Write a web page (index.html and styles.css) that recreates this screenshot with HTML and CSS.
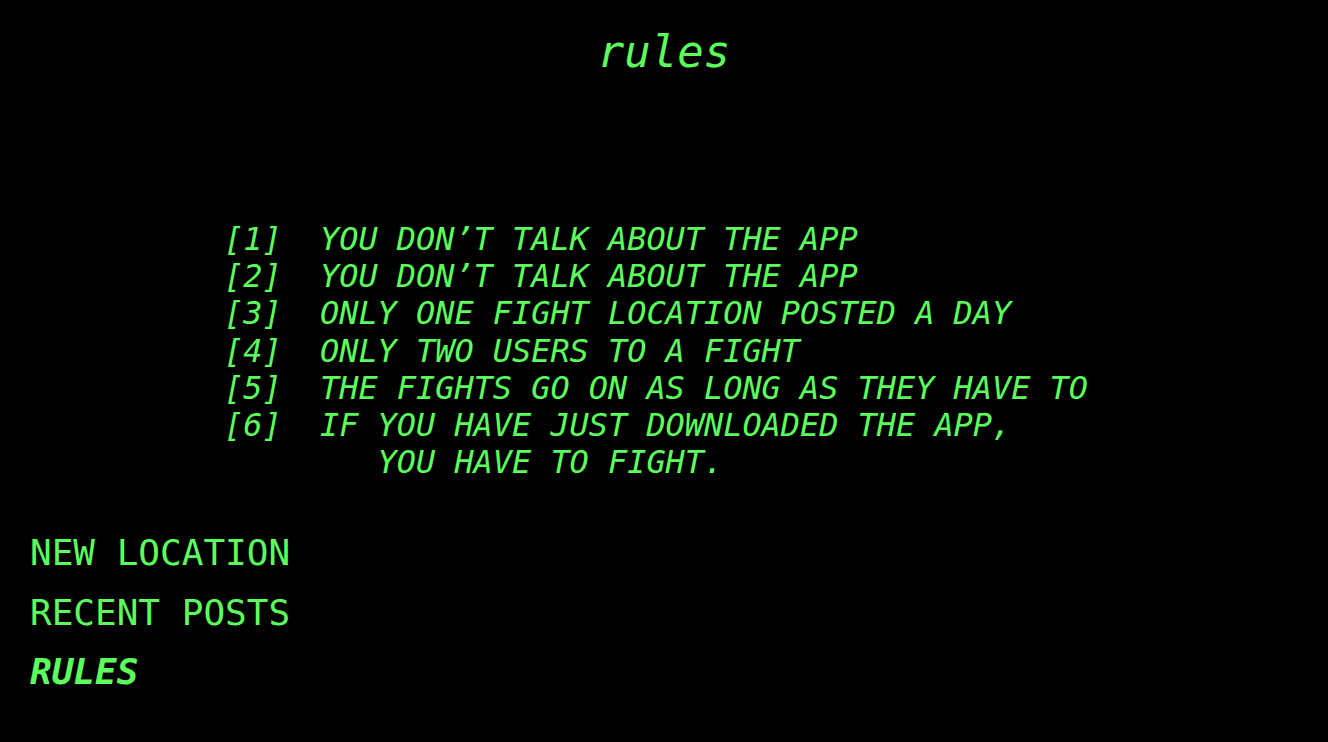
FILE: index.html
```html
<!DOCTYPE html>
<html lang="en">
<head>
<meta charset="utf-8">
<title>rules</title>
<link rel="stylesheet" href="styles.css">
</head>
<body>
<div class="page">
  <h1 class="title">rules</h1>
  <pre class="rules">[1]  YOU DON’T TALK ABOUT THE APP
[2]  YOU DON’T TALK ABOUT THE APP
[3]  ONLY ONE FIGHT LOCATION POSTED A DAY
[4]  ONLY TWO USERS TO A FIGHT
[5]  THE FIGHTS GO ON AS LONG AS THEY HAVE TO
[6]  IF YOU HAVE JUST DOWNLOADED THE APP,
        YOU HAVE TO FIGHT.</pre>
  <nav class="nav">
    <a class="nav-item" href="#">NEW LOCATION</a>
    <a class="nav-item" href="#">RECENT POSTS</a>
    <a class="nav-item active" href="#">RULES</a>
  </nav>
</div>
</body>
</html>
```

FILE: styles.css
```css
html, body {
  margin: 0;
  padding: 0;
  background: #000;
}
body {
  font-family: "DejaVu Sans Mono", monospace;
  color: #5cff5c;
}
.page {
  display: flex;
  flex-direction: column;
  min-height: 742px;
}
.title {
  margin: 0;
  padding-top: 26px;
  font-size: 44px;
  font-weight: normal;
  font-style: italic;
  line-height: 51px;
  text-align: center;
}
.rules {
  margin: 144px 0 0 224px;
  font-family: "DejaVu Sans Mono", monospace;
  font-size: 31.9px;
  font-style: italic;
  line-height: 37.2px;
}
.nav {
  display: flex;
  flex-direction: column;
  align-items: flex-start;
  margin-top: 42px;
  padding-left: 30px;
}
.nav-item {
  font-size: 36px;
  line-height: 59.5px;
  color: #5cff5c;
  text-decoration: none;
}
.nav-item.active {
  font-style: italic;
  font-weight: bold;
}
```
